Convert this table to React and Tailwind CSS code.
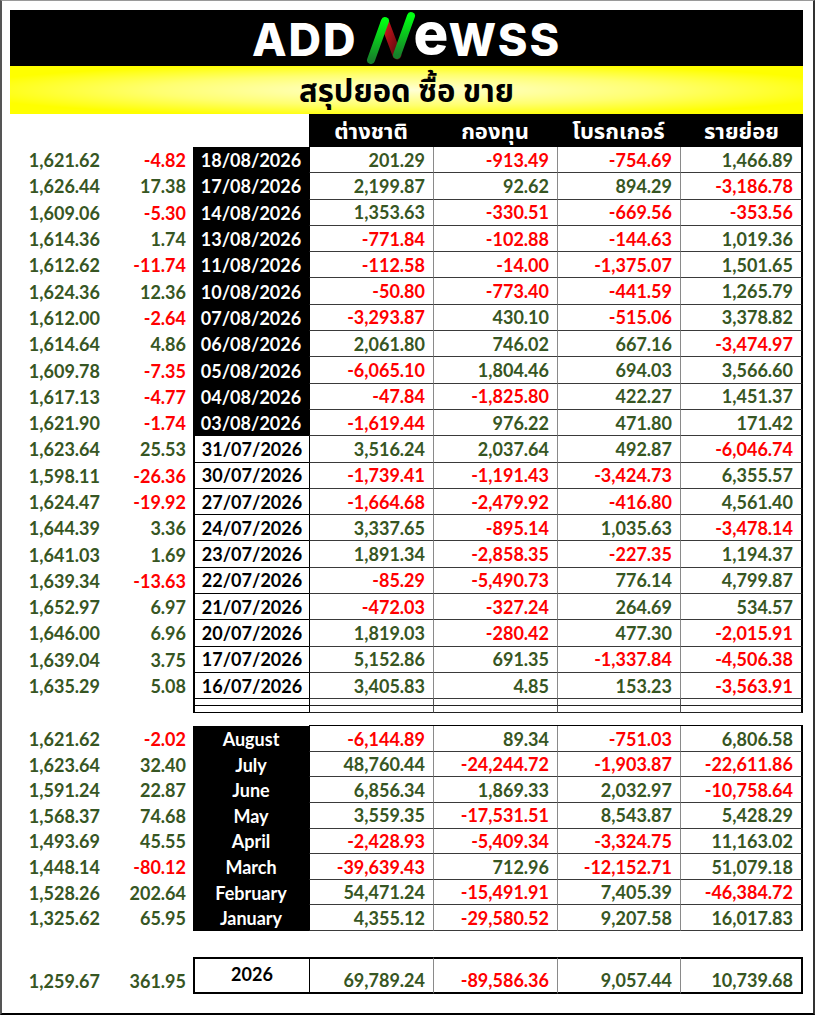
import React from 'react';

const COLS = 'grid grid-cols-[97px_86px_116px_124px_124px_123px_123px]';

const DAILY = [
  ['1,621.62', '-4.82', '18/08/2026', '201.29', '-913.49', '-754.69', '1,466.89'],
  ['1,626.44', '17.38', '17/08/2026', '2,199.87', '92.62', '894.29', '-3,186.78'],
  ['1,609.06', '-5.30', '14/08/2026', '1,353.63', '-330.51', '-669.56', '-353.56'],
  ['1,614.36', '1.74', '13/08/2026', '-771.84', '-102.88', '-144.63', '1,019.36'],
  ['1,612.62', '-11.74', '11/08/2026', '-112.58', '-14.00', '-1,375.07', '1,501.65'],
  ['1,624.36', '12.36', '10/08/2026', '-50.80', '-773.40', '-441.59', '1,265.79'],
  ['1,612.00', '-2.64', '07/08/2026', '-3,293.87', '430.10', '-515.06', '3,378.82'],
  ['1,614.64', '4.86', '06/08/2026', '2,061.80', '746.02', '667.16', '-3,474.97'],
  ['1,609.78', '-7.35', '05/08/2026', '-6,065.10', '1,804.46', '694.03', '3,566.60'],
  ['1,617.13', '-4.77', '04/08/2026', '-47.84', '-1,825.80', '422.27', '1,451.37'],
  ['1,621.90', '-1.74', '03/08/2026', '-1,619.44', '976.22', '471.80', '171.42'],
  ['1,623.64', '25.53', '31/07/2026', '3,516.24', '2,037.64', '492.87', '-6,046.74'],
  ['1,598.11', '-26.36', '30/07/2026', '-1,739.41', '-1,191.43', '-3,424.73', '6,355.57'],
  ['1,624.47', '-19.92', '27/07/2026', '-1,664.68', '-2,479.92', '-416.80', '4,561.40'],
  ['1,644.39', '3.36', '24/07/2026', '3,337.65', '-895.14', '1,035.63', '-3,478.14'],
  ['1,641.03', '1.69', '23/07/2026', '1,891.34', '-2,858.35', '-227.35', '1,194.37'],
  ['1,639.34', '-13.63', '22/07/2026', '-85.29', '-5,490.73', '776.14', '4,799.87'],
  ['1,652.97', '6.97', '21/07/2026', '-472.03', '-327.24', '264.69', '534.57'],
  ['1,646.00', '6.96', '20/07/2026', '1,819.03', '-280.42', '477.30', '-2,015.91'],
  ['1,639.04', '3.75', '17/07/2026', '5,152.86', '691.35', '-1,337.84', '-4,506.38'],
  ['1,635.29', '5.08', '16/07/2026', '3,405.83', '4.85', '153.23', '-3,563.91'],
];

const MONTHS = [
  ['1,621.62', '-2.02', 'August', '-6,144.89', '89.34', '-751.03', '6,806.58'],
  ['1,623.64', '32.40', 'July', '48,760.44', '-24,244.72', '-1,903.87', '-22,611.86'],
  ['1,591.24', '22.87', 'June', '6,856.34', '1,869.33', '2,032.97', '-10,758.64'],
  ['1,568.37', '74.68', 'May', '3,559.35', '-17,531.51', '8,543.87', '5,428.29'],
  ['1,493.69', '45.55', 'April', '-2,428.93', '-5,409.34', '-3,324.75', '11,163.02'],
  ['1,448.14', '-80.12', 'March', '-39,639.43', '712.96', '-12,152.71', '51,079.18'],
  ['1,528.26', '202.64', 'February', '54,471.24', '-15,491.91', '7,405.39', '-46,384.72'],
  ['1,325.62', '65.95', 'January', '4,355.12', '-29,580.52', '9,207.58', '16,017.83'],
];

const TOTAL = ['1,259.67', '361.95', '2026', '69,789.24', '-89,586.36', '9,057.44', '10,739.68'];

const HEADERS = ['ต่างชาติ', 'กองทุน', 'โบรกเกอร์', 'รายย่อย'];

const tone = (v) => (v.startsWith('-') ? 'text-[#ff0000]' : 'text-[#375623]');

// logo: white letters with the green/red "N" mark drawn in svg
function Logo() {
  return (
    <div className="flex items-center h-[56px] text-white font-['Inter',sans-serif] font-extrabold leading-none">
      <span className="text-[45px] tracking-[2px] translate-y-[1px]">ADD</span>
      <svg width="50" height="54" viewBox="0 0 50 54" className="ml-[8px] shrink-0">
        <defs>
          <linearGradient id="g" x1="0" y1="0" x2="0" y2="1">
            <stop offset="0" stopColor="#00ff12" />
            <stop offset="1" stopColor="#17802a" />
          </linearGradient>
          <linearGradient id="r" x1="0" y1="0" x2="1" y2="1">
            <stop offset="0" stopColor="#d4141c" />
            <stop offset="1" stopColor="#5a0a0e" />
          </linearGradient>
        </defs>
        <line x1="19" y1="12" x2="31" y2="44" stroke="url(#r)" strokeWidth="9" strokeLinecap="round" />
        <line x1="5" y1="49" x2="19" y2="10" stroke="url(#g)" strokeWidth="8" strokeLinecap="round" />
        <line x1="31" y1="44" x2="45" y2="5" stroke="url(#g)" strokeWidth="8" strokeLinecap="round" />
      </svg>
      <span className="text-[58px] leading-[40px] -ml-[2px] -translate-y-[5px]">e</span>
      <span className="text-[45px] tracking-[2px] translate-y-[1px]">WSS</span>
    </div>
  );
}

function DailyRow({ r, dark }) {
  return (
    <div className={`${COLS} h-[26.3px]`}>
      <div className="flex items-center justify-end pr-[7px] text-[#375623]">{r[0]}</div>
      <div className={`flex items-center justify-end pr-[7px] ${tone(r[1])}`}>{r[1]}</div>
      {dark ? (
        <div className="flex items-center justify-center bg-black text-white">{r[2]}</div>
      ) : (
        <div className="flex items-center justify-center border-l-2 border-b border-black text-black">{r[2]}</div>
      )}
      {r.slice(3).map((v, i) => (
        <div
          key={i}
          className={`flex items-center justify-end pr-[8px] border-b border-b-[#3a3a3a] border-l ${i === 0 ? 'border-l-black' : 'border-l-[#8a8a8a]'} ${i === 3 ? 'border-r-2 border-r-black' : ''} ${tone(v)}`}
        >
          {v}
        </div>
      ))}
    </div>
  );
}

function MonthRow({ r }) {
  return (
    <div className={`${COLS} h-[25.6px]`}>
      <div className="flex items-center justify-end pr-[7px] text-[#375623]">{r[0]}</div>
      <div className={`flex items-center justify-end pr-[7px] ${tone(r[1])}`}>{r[1]}</div>
      <div className="flex items-center justify-center bg-black text-white">{r[2]}</div>
      {r.slice(3).map((v, i) => (
        <div
          key={i}
          className={`flex items-center justify-end pr-[8px] border-b border-b-[#3a3a3a] border-l ${i === 0 ? 'border-l-black' : 'border-l-[#8a8a8a]'} ${i === 3 ? 'border-r-2 border-r-black' : ''} ${tone(v)}`}
        >
          {v}
        </div>
      ))}
    </div>
  );
}

function ThinRow({ h }) {
  return (
    <div className={`${COLS} ${h}`}>
      <div />
      <div />
      <div className="border-l-2 border-b border-black" />
      {[0, 1, 2, 3].map((i) => (
        <div key={i} className={`border-b border-b-[#222] border-l ${i === 0 ? 'border-l-black' : 'border-l-[#555]'} ${i === 3 ? 'border-r-2 border-r-black' : ''}`} />
      ))}
    </div>
  );
}

export default function App() {
  return (
    <div className="w-[815px] h-[1015px] bg-white border-t border-t-[#9a9a9a] border-l-2 border-l-[#555] border-r-2 border-r-[#333] border-b-2 border-b-black pl-[8px] pt-[9px] font-['Lato','Noto_Sans_Thai','Tahoma',sans-serif] font-bold text-[18px] leading-none">
      <div className="w-[793px]">
        <div className="h-[56px] bg-black flex items-center justify-center">
          <Logo />
        </div>
        <div className="h-[48px] flex items-center justify-center bg-[radial-gradient(ellipse_at_center,#ffffd6_0%,#ffff70_45%,#ffff00_80%)]">
          <span className="text-[31px] text-black font-bold">สรุปยอด ซื้อ ขาย</span>
        </div>

        <div className={`${COLS} h-[33px]`}>
          <div />
          <div />
          <div />
          {HEADERS.map((h) => (
            <div key={h} className="bg-black text-white text-[22px] flex items-center justify-center">
              {h}
            </div>
          ))}
        </div>

        {DAILY.map((r, i) => (
          <DailyRow key={r[2]} r={r} dark={i < 11} />
        ))}
        <ThinRow h="h-[7px]" />
        <ThinRow h="h-[7px]" />

        <div className="h-[12px]" />

        <div className={COLS}>
          <div />
          <div />
          <div />
          <div className="col-span-4 border-t border-t-black" />
        </div>
        {MONTHS.map((r) => (
          <MonthRow key={r[2]} r={r} />
        ))}

        <div className="h-[26px]" />

        <div className={`${COLS} h-[37px]`}>
          <div className="flex items-end justify-end pr-[7px] pb-[4px] text-[#375623]">{TOTAL[0]}</div>
          <div className={`flex items-end justify-end pr-[7px] pb-[4px] ${tone(TOTAL[1])}`}>{TOTAL[1]}</div>
          <div className="flex items-center justify-center pb-[2px] border-2 border-r-0 border-black text-black">{TOTAL[2]}</div>
          {TOTAL.slice(3).map((v, i) => (
            <div
              key={i}
              className={`flex items-end justify-end pr-[8px] pb-[3px] border-y-2 border-y-black border-l ${i === 0 ? 'border-l-black' : 'border-l-[#8a8a8a]'} ${i === 3 ? 'border-r-2 border-r-black' : ''} ${tone(v)}`}
            >
              {v}
            </div>
          ))}
        </div>
      </div>
    </div>
  );
}
